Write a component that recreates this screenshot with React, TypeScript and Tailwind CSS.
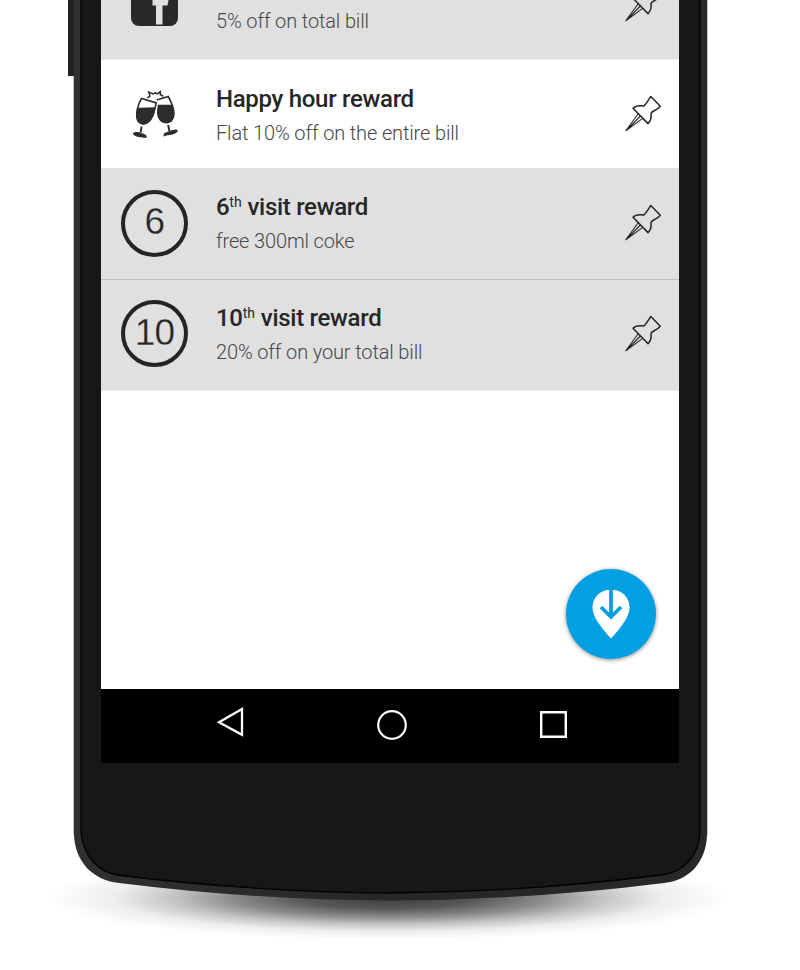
import type { ReactNode } from "react";

function PhoneBody() {
  return (
    <svg className="absolute inset-0" width="800" height="970" viewBox="0 0 800 970" aria-hidden="true">
      <defs>
        <radialGradient id="ground" cx="0.5" cy="0.5" r="0.5">
          <stop offset="0" stopColor="#000" stopOpacity="0.76" />
          <stop offset="0.25" stopColor="#000" stopOpacity="0.66" />
          <stop offset="0.45" stopColor="#000" stopOpacity="0.46" />
          <stop offset="0.62" stopColor="#000" stopOpacity="0.24" />
          <stop offset="0.8" stopColor="#000" stopOpacity="0.07" />
          <stop offset="1" stopColor="#000" stopOpacity="0" />
        </radialGradient>
        <linearGradient id="rim" x1="0" x2="1">
          <stop offset="0" stopColor="#303030" />
          <stop offset="0.5" stopColor="#272727" />
          <stop offset="1" stopColor="#282828" />
        </linearGradient>
      </defs>
      <ellipse cx="388" cy="898" rx="342" ry="42" fill="url(#ground)" />
      <path d="M68 0H75V76H68Z" fill="#202020" />
      <path d="M73.4 76H75V835H73.4ZM706 0H707.6V835H706Z" fill="#999" />
      <path d="M74 0V835C75 861 92 880 119 883Q255 900 390 900.5Q530 900 664 883C691 880 706 861 707 835V0Z" fill="url(#rim)" />
      <path d="M81 -4V832C83 857 99 873 121 875.5Q255 892 390 893Q530 892 664 874.5C685 871 699 855 700 832V-4Z" fill="#171717" stroke="#000" strokeWidth="1.3" />
    </svg>
  );
}

function PinIcon() {
  return (
    <svg width="38" height="38" viewBox="0 0 38 38" fill="none" stroke="#242424" strokeWidth="1.5" strokeLinejoin="round" className="ml-auto mr-[17px] shrink-0">
      <path d="M26.8 1.5L36.3 11.2C35.6 12.4 34 13.4 32.5 14.4C29.8 16 27.3 17 27 18.3C27.4 21.5 27.2 25.6 24 28.6L9 13.3C11.5 10.7 16 10.4 19.8 11.1C22.4 8.8 24.8 4.3 26.8 1.5Z" />
      <path d="M14.2 18.8L1.8 35.8L18.7 23.4M1.8 35.8L16.4 21" strokeWidth="1.1" />
    </svg>
  );
}

function GlassesIcon() {
  return (
    <svg width="48" height="50" viewBox="0 0 48 50" fill="none" stroke="#2d2d2d" strokeWidth="1.6" className="overflow-visible">
      <g transform="translate(1.5 1.5)">
        <path d="M9 8C5 14.5 2.8 24 5.3 29.7C7.5 34.2 12.9 34.4 16.2 31C21 26.2 22 18.8 23.8 12.4Z" />
        <path d="M5.6 18L22.4 17.5C21.6 23.5 19.9 28 16.2 31C12.7 34.2 7.6 34 5.3 29.7C4 26 4.4 22 5.6 18Z" fill="#2d2d2d" />
        <path d="M24.2 9.4L35.8 6C38.8 11.5 42.6 20 40.8 26.4C38.5 33.2 31 33.4 27.4 28.8" />
        <path d="M26 15L39.5 15.1C41.2 19.2 41.6 23.4 40.8 26.4C38.5 33.2 31 33.4 27.4 28.8C24.4 24.7 25.2 20.3 26 15Z" fill="#2d2d2d" />
        <path d="M9.1 36L8.1 42M35.6 34.5L37 41" strokeWidth="1.9" />
        <path d="M.3 43C3 40.7 6.7 41.7 9.3 42.7C12.8 43.5 15 45 13.8 47.4C8.4 46.6 2.7 47.3.3 43Z" fill="#2d2d2d" stroke="none" />
        <path d="M31 44.8C31.1 42.1 34.6 41.6 37 40.8C40.1 39.4 43.9 38 45.6 40.3C42.3 45.5 36.2 43.8 31.5 46Z" fill="#2d2d2d" stroke="none" />
        <path d="M14.7 7.4L17.5 5.6L16.2 1.6L20.6 3.5L22.7 2.4L24.8 3.3L27.9 1.1L27.8 4.2L31 5.9" strokeWidth="1.5" />
      </g>
    </svg>
  );
}

function FacebookIcon() {
  return (
    <svg width="47" height="47" viewBox="0 0 47 47" className="relative -top-px">
      <rect width="47" height="47" rx="8" fill="#292929" />
      <path d="M25 45.5V26.5H21.5V21H25V16C25 10 28 7 34 7H38V14H34C31.5 14 31.5 15 31.5 17V21H37.5L36.5 26.5H31.5V45.5Z" fill="#e0e0e0" />
    </svg>
  );
}

function Visits({ count }: { count: number }) {
  return (
    <div className="flex size-[67px] items-center justify-center rounded-full border-4 border-[#242424] pb-[3px] text-[37px] leading-none tracking-[-0.8px] text-[#242424]">
      <span className="font-['Liberation_Sans',Arial,sans-serif] [-webkit-text-stroke:0.3px_#e0e0e0]">{count}</span>
    </div>
  );
}

interface RewardProps {
  icon: ReactNode;
  title: ReactNode;
  detail: string;
  className: string;
  textClassName?: string;
}

function Reward({ icon, title, detail, className, textClassName = "" }: RewardProps) {
  return (
    <li className={`flex shrink-0 items-center ${className}`}>
      <div className="flex w-[107px] shrink-0 justify-center">{icon}</div>
      <div className={`ml-2 whitespace-nowrap ${textClassName}`}>
        <h2 className="h-[34px] text-2xl leading-[34px] font-medium tracking-[-0.3px] text-[#262626]">{title}</h2>
        <p className="h-[34px] text-xl leading-[34px] font-light tracking-[-0.14px] text-[#484848]">{detail}</p>
      </div>
      <PinIcon />
    </li>
  );
}

function Th() {
  return <sup className="relative top-[-8px] align-baseline text-[14px] leading-none font-normal tracking-[0.1px]">th</sup>;
}

export default function App() {
  return (
    <div className="relative h-[970px] w-[800px] overflow-hidden bg-white font-[Roboto,sans-serif]">
      <PhoneBody />
      <main className="relative ml-[101px] flex h-[763px] w-[578px] flex-col overflow-hidden bg-white">
        <ul>
          <Reward className="-mt-[52px] h-[112px] border-b border-[#eeeeee] bg-[#e0e0e0]" icon={<FacebookIcon />} title="" detail="5% off on total bill" />
          <Reward className="h-[108px] bg-white" textClassName="pt-1" icon={<GlassesIcon />} title="Happy hour reward" detail="Flat 10% off on the entire bill" />
          <Reward className="h-[111px] bg-[#e0e0e0] pb-px" textClassName="pt-px" icon={<Visits count={6} />} title={<>6<Th /> visit reward</>} detail="free 300ml coke" />
          <Reward className="h-[112px] border-t border-b border-t-[#bdbdbd] border-b-[#eeeeee] bg-[#e0e0e0] pb-[3px]" textClassName="pt-[2px]" icon={<Visits count={10} />} title={<>10<Th /> visit reward</>} detail="20% off on your total bill" />
        </ul>
        <div className="flex flex-1 items-end justify-end pr-[23px] pb-[30px]">
          <button className="flex size-[90px] items-center justify-center rounded-full bg-[#039fe3] shadow-[0_1px_4px_rgba(0,0,0,0.45)]" aria-label="Check in">
            <svg width="38" height="50" viewBox="0 0 38 50">
              <path d="M19 .8C8 .8.5 8.4.5 18.5C.5 27.2 7 36 19 49.5C31 36 37.5 27.2 37.5 18.5C37.5 8.4 30 .8 19 .8Z" fill="#fff" />
              <path d="M19 0V27.5M9 18L19 28L29 18" fill="none" stroke="#039fe3" strokeWidth="3.7" />
            </svg>
          </button>
        </div>
        <nav className="flex h-[74px] shrink-0 bg-black pl-[115px]">
          <svg width="29" height="32" viewBox="0 0 29 32" className="mt-[17px]" fill="none" stroke="#fff" strokeWidth="2.3"><path d="M26 3V28.8L3 16.2Z" /></svg>
          <svg width="30" height="30" viewBox="0 0 30 30" className="mt-[21px] ml-[132px]" fill="none" stroke="#fff" strokeWidth="2.2"><circle cx="15" cy="15" r="13.8" /></svg>
          <svg width="27" height="27" viewBox="0 0 27 27" className="mt-[22px] ml-[133px]" fill="none" stroke="#fff" strokeWidth="2.4"><path d="M1.2 1.2H25.8V25.8H1.2Z" /></svg>
        </nav>
      </main>
    </div>
  );
}
